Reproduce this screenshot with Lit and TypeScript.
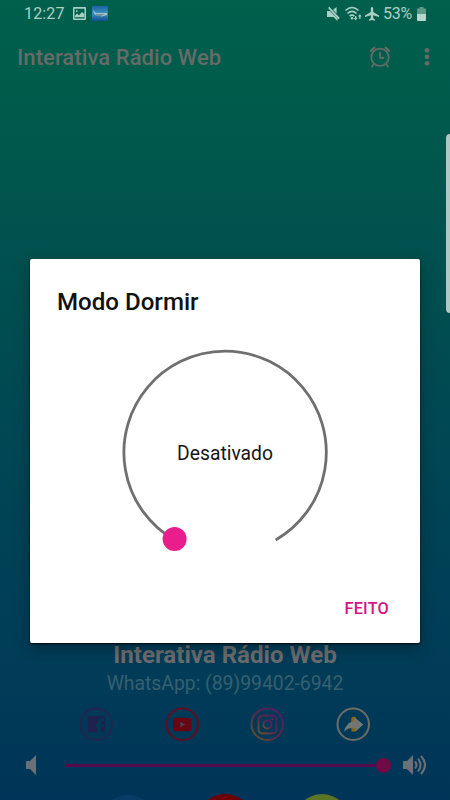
import { LitElement, html, css, svg } from "lit";
import { customElement } from "lit/decorators.js";

@customElement("app-root")
export class AppRoot extends LitElement {
  static styles = css`
    :host {
      display: block;
      position: relative;
      width: 450px;
      height: 800px;
      overflow: hidden;
      font-family: Roboto, "Liberation Sans", sans-serif;
      background: linear-gradient(180deg, #00604c 0%, #005b4b 12%, #00504f 33%, #004455 62%, #003b58 86%, #003458 100%);
    }
    * { box-sizing: border-box; }
    svg { display: block; flex: none; overflow: visible; }
    .screen { display: flex; flex-direction: column; height: 800px; }
    .status {
      display: flex; align-items: center; height: 27px; padding: 0 24px 0 24px;
      color: #aad0c5; font-size: 16px; line-height: 27px; flex: none;
    }
    .clock { width: 49px; letter-spacing: 0.15px; }
    .thumb { margin-left: 6px; }
    .right { display: flex; align-items: center; margin-left: auto; }
    .percent { font-size: 16px; letter-spacing: -0.2px; margin-left: 4px; width: 34px; }
    .bar {
      display: flex; align-items: center; height: 60px; padding: 0 19px 0 17px;
      color: #666b68; flex: none;
    }
    .title { font-size: 22px; font-weight: 500; letter-spacing: 0.08px; flex: 1; white-space: nowrap; }
    .more { margin-left: 32px; }
    .player { margin-top: auto; display: flex; flex-direction: column; align-items: center; height: 160px; flex: none; }
    .station { font-size: 24.1px; font-weight: 700; line-height: 28px; color: #6c6c6e; white-space: nowrap; margin-top: 1px; }
    .phone { font-size: 19.4px; line-height: 28px; color: #36606f; white-space: nowrap; margin-top: 1px; letter-spacing: -0.03px; }
    .social { display: flex; gap: 51px; margin-top: 9px; margin-right: 1px; }
    .volume { display: flex; align-items: center; width: 100%; height: 34px; padding: 0 22px 0 26px; margin-top: 9px; }
    .track { flex: 1; margin: 0 12px 0 29px; display: flex; align-items: center; height: 16px; }
    .fill { flex: 1; height: 2.5px; background: #520b4e; }
    .thumbdot { width: 15px; height: 15px; border-radius: 50%; background: #700945; flex: none; }
    .tabs { display: flex; justify-content: center; gap: 41px; height: 20px; padding-top: 14px; }
    .tab { width: 56px; height: 56px; border-radius: 50%; flex: none; }
    .blue { background: #0a3c68; margin-top: 1px; }
    .red { background: #6d0006; }
    .green { background: #5a7325; }
    .edge {
      position: absolute; right: -4px; top: 134px; width: 8px; height: 179px;
      border-radius: 4px; background: #adc9c6;
    }
    .dialog {
      position: absolute; left: 30px; top: 259px; width: 390px; height: 384px;
      border-radius: 2px; background: #fff; display: flex; flex-direction: column;
      box-shadow: 0 1px 2px rgba(0,0,0,.85), 0 5px 16px rgba(0,0,0,.3);
    }
    .heading { padding: 28px 26px 0 27px; font-size: 24.1px; line-height: 31px; font-weight: 500; color: #111; white-space: nowrap; }
    .dial { display: grid; place-items: center; align-self: center; width: 210px; height: 210px; margin-top: 30px; }
    .dial > * { grid-area: 1 / 1; }
    .value { font-size: 19.3px; line-height: 24px; color: #161616; padding-top: 2px; }
    .actions { display: flex; justify-content: flex-end; margin-top: 40px; padding-right: 31px; }
    .done { font-size: 16.3px; font-weight: 500; line-height: 22px; letter-spacing: 0.2px; color: #d41485; white-space: nowrap; }
  `;

  private picture() {
    return html`<svg width="13" height="13" viewBox="0 0 13 12" preserveAspectRatio="none"><path fill="#aad0c5" fill-rule="evenodd" d="M1 0h11a1 1 0 0 1 1 1v10a1 1 0 0 1-1 1H1a1 1 0 0 1-1-1V1a1 1 0 0 1 1-1ZM1.5 1.5v9h10v-9ZM2 9.5V8l2-2 2 1.6L9 4.5l2.2 2v3ZM3 3h1.5v1.5H3Z"/></svg>`;
  }

  private badge() {
    return html`<svg class="thumb" width="16" height="15" viewBox="0 0 16 15"><defs><linearGradient id="sky" x2="0" y2="1"><stop stop-color="#1d61a5"/><stop offset=".5" stop-color="#3b94c0"/><stop offset="1" stop-color="#124b91"/></linearGradient></defs><path fill="url(#sky)" d="M0 0h16v15H0z"/><path fill="#a4c4ca" d="M1 4l3 3 11 0v2l-5 1.5-7-1.5Z"/><path fill="#7090a0" d="M3 8h10l-4 2H5Z"/></svg>`;
  }

  private statusIcons() {
    return html`<svg width="52" height="16" viewBox="0 0 52 16" fill="#aad0c5">
      <path d="M0 5h3l7.5 7.5V15L6.5 11H0ZM6 3.8 9.6 1v6.4ZM1 2l1.3-1.3L12.8 12l-1.3 1.3Z"/>
      <g fill="none" stroke="#aad0c5" stroke-width="1.6"><path d="M18.5 4.500q6.500-6 13 0M20.500 7.500q4.500-4.200 9 0M22.600 10.200q2.400-2.200 4.800 0"/></g>
      <circle cx="25" cy="12.300" r="1.300"/><path d="M28 10h1.400v2h1.200l-2 2.300-2-2.300H28ZM32.200 13h1.300v-2.500h1.200l-1.900-2.300-1.900 2.300h1.300Z"/>
      <path d="M45 1c.8 0 1.200.8 1.200 1.600V6l5.800 3.400v1.700L46.200 9.300v3l1.800 1.200v1.200L45 14l-3 .7v-1.200l1.800-1.200v-3L38 11.100V9.400L43.800 6V2.600C43.800 1.800 44.200 1 45 1Z"/>
    </svg>`;
  }

  private alarm() {
    return html`<svg width="22" height="22" viewBox="0 0 22 22" fill="none" stroke="#666b68" stroke-width="1.7"><circle cx="11" cy="11.3" r="8.7"/><path d="M11 6v5.8h4.2M5 18l-2.4 3.3M17 18l2.4 3.3"/><path stroke-width="2.3" d="M1.2 5.5 6 1.2M16 1.2l4.8 4.3"/></svg>`;
  }

  private ring(color: string, content: unknown) {
    return html`<svg width="34.5" height="34.5" viewBox="0 0 34 34"><defs><linearGradient id="ig" x1="0" y1="1" x2="1" y2="0"><stop stop-color="#60572f"/><stop offset=".45" stop-color="#5c2949"/><stop offset="1" stop-color="#472061"/></linearGradient></defs><circle cx="17" cy="17" r="15.5" fill="none" stroke=${color} stroke-width="2"/>${content}</svg>`;
  }

  render() {
    return html`
      <div class="screen">
        <div class="status">
          <span class="clock">12:27</span>${this.picture()}${this.badge()}
          <div class="right">${this.statusIcons()}<span class="percent">53%</span>
            <svg width="9" height="14" viewBox="0 0 9 14"><path fill="#5f9988" d="M2.5 0h4v1.5H9V7H0V1.5h2.5Z"/><path fill="#b7d8ce" d="M0 7h9v6q0 1-1 1H1q-1 0-1-1Z"/></svg>
          </div>
        </div>
        <div class="bar">
          <span class="title">Interativa Rádio Web</span>${this.alarm()}
          <svg class="more" width="8" height="20" viewBox="0 0 8 20" fill="#666b68"><circle cx="4" cy="3.3" r="2.4"/><circle cx="4" cy="9.8" r="2.4"/><circle cx="4" cy="16.3" r="2.4"/></svg>
        </div>
        <div class="player">
          <div class="station">Interativa Rádio Web</div>
          <div class="phone">WhatsApp: (89)99402-6942</div>
          <div class="social">
            ${this.ring("#20264f", svg`<path fill="#20224d" d="M8.5 9h17v16h-4.2v-5.5h3l.4-2.500h-3.400v-2q0-1.200 1.400-1.200h2v-2.500h-3q-3.300 0-3.300 3.200V17h-2.200v2.500h2.200V25H8.500Z"/>`)}
            ${this.ring("#600d21", svg`<rect x="8" y="10.5" width="18" height="13.5" rx="2.5" fill="#680613"/><path d="m15 14.5 5 2.7-5 2.7Z" fill="#484052"/>`)}
            ${this.ring("url(#ig)", svg`<g fill="none" stroke="url(#ig)" stroke-width="2"><rect x="8.5" y="8.5" width="17.5" height="17.5" rx="3.5"/><circle cx="17.2" cy="17.2" r="4"/></g><circle cx="22.2" cy="12" r="1.1" fill="#5c2949"/>`)}
            ${this.ring("#6a6d67", svg`<rect x="15" y="9.5" width="5" height="15" rx="2" fill="#86660c"/><path fill="#727675" d="m18 10 9 7.3-8 7.2v-4q-7-.7-11 3.800 1.500-9.200 10-10.300Z"/>`)}
          </div>
          <div class="volume">
            <svg width="10" height="20" viewBox="0 0 10 20"><path fill="#6b7076" d="M0 6h4l6-6v20l-6-6H0Z"/></svg>
            <div class="track"><div class="fill"></div><div class="thumbdot"></div></div>
            <svg width="25" height="20" viewBox="0 0 25 20"><path fill="#6b7076" d="M0 6h4l6-6v20l-6-6H0Z"/><g fill="none" stroke="#6b7076" stroke-width="2"><path d="M12 6.500q3 3.500 0 7M15 3.500q5 6.500 0 13M18 1q8 9 0 18"/></g></svg>
          </div>
          <div class="tabs"><div class="tab blue"></div><div class="tab red"></div><div class="tab green"></div></div>
        </div>
      </div>
      <div class="edge"></div>
      <div class="dialog">
        <div class="heading">Modo Dormir</div>
        <div class="dial">
          <svg width="210" height="210" viewBox="0 0 210 210"><path d="M54.5 192A101.2 101.2 0 1 1 155.7 192" fill="none" stroke="#6f6f6f" stroke-width="2.8"/><circle cx="54.6" cy="191" r="12" fill="#e91e8c"/></svg>
          <span class="value">Desativado</span>
        </div>
        <div class="actions"><span class="done">FEITO</span></div>
      </div>`;
  }
}
